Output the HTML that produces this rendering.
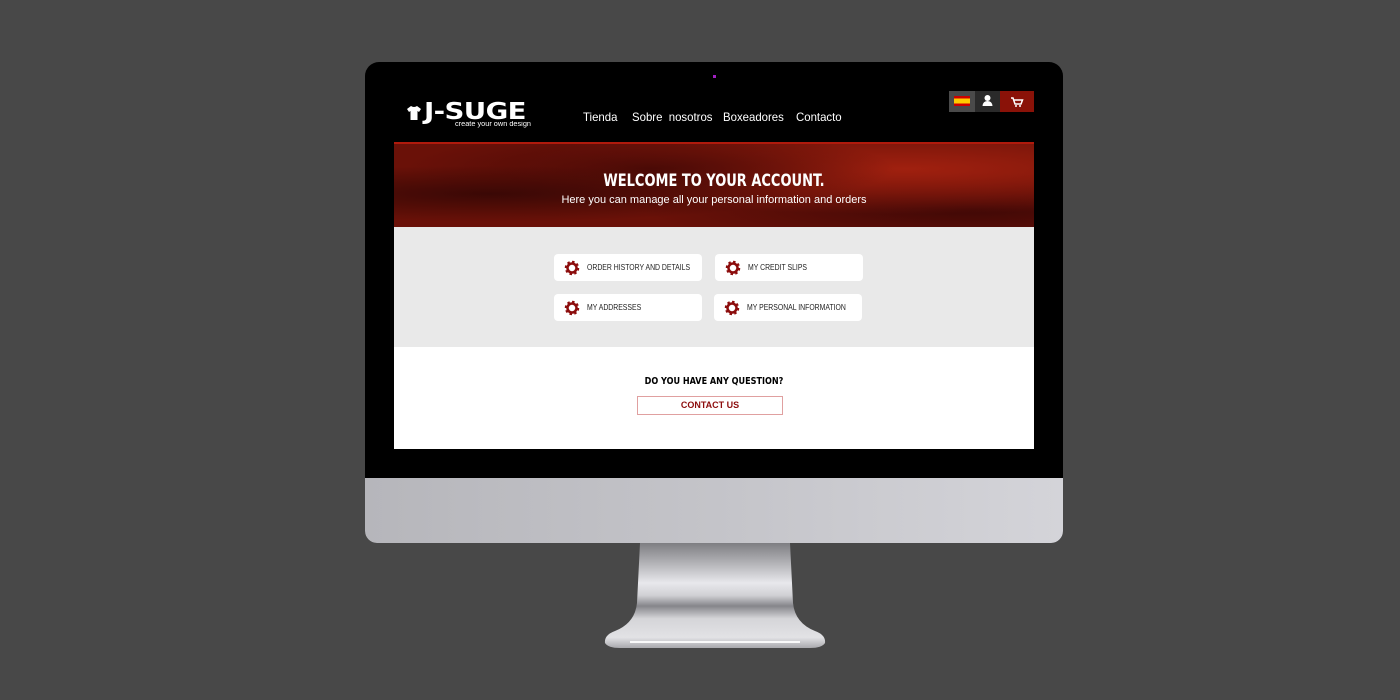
<!DOCTYPE html>
<html><head><meta charset="utf-8"><style>
*{margin:0;padding:0;box-sizing:border-box}
body{width:1400px;height:700px;background:#484848;position:relative;overflow:hidden;font-family:"Liberation Sans",sans-serif}
.mon{position:absolute;left:365px;top:62px;width:698px;height:481px;background:#000;border-radius:14px 14px 12px 12px;overflow:hidden}
.chin{position:absolute;left:0;top:416px;width:698px;height:65px;background:linear-gradient(90deg,#b6b6bb,#c4c4c9 50%,#d4d4d9)}
.cam{position:absolute;left:348px;top:13px;width:3px;height:3px;background:#a020c0}
.a{position:absolute}
.nav{color:#fff;font-size:12px;top:48px;transform:scaleX(.95);transform-origin:left}
.card{position:absolute;background:#fff;border-radius:4px;width:148px;height:27px;color:#222}
.card span{position:absolute;left:33px;top:9px;font-size:8px;white-space:nowrap;transform:scaleX(.86);transform-origin:left}
.card svg{position:absolute;left:10px;top:6px}
</style></head><body>
<svg class="a" style="left:600px;top:543px" width="230" height="110" viewBox="0 0 230 110">
<defs><linearGradient id="g" x1="0" y1="0" x2="0" y2="1">
<stop offset="0" stop-color="#7e7e82"/><stop offset=".2" stop-color="#b5b5b9"/><stop offset=".38" stop-color="#e8e8ec"/><stop offset=".5" stop-color="#d0d0d4"/><stop offset=".6" stop-color="#85858a"/><stop offset=".72" stop-color="#d5d5d8"/><stop offset=".9" stop-color="#e2e2e5"/><stop offset="1" stop-color="#a9a9ad"/></linearGradient></defs>
<path d="M40 0 H190 L193 60 Q195 80 215 88 Q226 92 225 100 Q222 105 210 105 H20 Q8 105 5 100 Q4 92 15 88 Q35 80 37 60 Z" fill="url(#g)"/>
<rect x="30" y="98" width="170" height="2" fill="#fafafa"/>
</svg>
<div class="mon">
<div class="cam"></div>
<div class="chin"></div>
<!-- logo -->
<svg class="a" style="left:42px;top:44px" width="14" height="14" viewBox="0 0 14 14"><path d="M4 0 L0 3 L2 6 L3.5 5 V14 H10.5 V5 L12 6 L14 3 L10 0 Q7 2 4 0 Z" fill="#fff"/></svg>
<div class="a" style="left:59px;top:39px;color:#fff;font-size:23px;line-height:23px;font-weight:bold;font-family:'DejaVu Sans','Liberation Sans',sans-serif;white-space:nowrap;transform:scaleX(1.2);transform-origin:left;letter-spacing:-0.5px">J-SUGE</div>
<div class="a" style="left:90px;top:59px;color:#fff;font-size:7px;white-space:nowrap;transform:scaleX(1.05);transform-origin:left">create your own design</div>
<div class="a nav" style="left:218px">Tienda</div>
<div class="a nav" style="left:267px">Sobre&nbsp; nosotros</div>
<div class="a nav" style="left:358px">Boxeadores</div>
<div class="a nav" style="left:431px">Contacto</div>
<div class="a" style="left:584px;top:29px;width:26px;height:21px;background:#4a4a4a"><div style="margin:5px 0 0 5px;width:16px;height:10px;background:linear-gradient(#c00 25%,#fc0 25%,#fc0 75%,#c00 75%)"></div></div>
<div class="a" style="left:610px;top:29px;width:25px;height:21px;background:#2a2a2a"><svg width="25" height="21"><circle cx="12.5" cy="7" r="3" fill="#fff"/><path d="M7.5 15 Q8 10 12.5 10 Q17 10 17.5 15 Z" fill="#fff"/></svg></div>
<div class="a" style="left:635px;top:29px;width:34px;height:21px;background:#8a1208"><svg width="34" height="21"><path d="M11 7 H13 L15 13 H21 L22.5 9 H14" stroke="#fff" stroke-width="1.5" fill="none"/><circle cx="16" cy="15" r="1" fill="#fff"/><circle cx="20" cy="15" r="1" fill="#fff"/></svg></div>
<!-- screen content -->
<div class="a" style="left:29px;top:80px;width:640px;height:85px;background:radial-gradient(ellipse at 15% 60%,#3a0805,transparent 40%),radial-gradient(ellipse at 40% 30%,#4a0a06,transparent 45%),radial-gradient(ellipse at 80% 30%,#a0200f,transparent 55%),radial-gradient(ellipse at 90% 80%,#400806,transparent 40%),#6a1108;border-top:2px solid #b01a0c">
<div style="text-align:center;color:#fff;font-family:'DejaVu Sans Condensed','Liberation Sans Narrow',sans-serif;font-weight:bold;font-size:17px;margin-top:27px;transform:scaleX(.85)">WELCOME TO YOUR ACCOUNT.</div>
<div style="text-align:center;color:#fff;font-size:11px;margin-top:3px">Here you can manage all your personal information and orders</div>
</div>
<div class="a" style="left:29px;top:165px;width:640px;height:120px;background:#e9e9e9"></div>
<div class="a" style="left:29px;top:285px;width:640px;height:102px;background:#fff"></div>
<div class="card" style="left:189px;top:192px"><span>ORDER HISTORY AND DETAILS</span><svg width="16" height="16" viewBox="0 0 16 16"><circle cx="8" cy="8" r="5.5" fill="none" stroke="#8c0c0c" stroke-width="3.5" stroke-dasharray="2.2 2.1"/><circle cx="8" cy="8" r="4.5" fill="none" stroke="#8c0c0c" stroke-width="2.5"/></svg></div>
<div class="card" style="left:350px;top:192px"><span>MY CREDIT SLIPS</span><svg width="16" height="16" viewBox="0 0 16 16"><circle cx="8" cy="8" r="5.5" fill="none" stroke="#8c0c0c" stroke-width="3.5" stroke-dasharray="2.2 2.1"/><circle cx="8" cy="8" r="4.5" fill="none" stroke="#8c0c0c" stroke-width="2.5"/></svg></div>
<div class="card" style="left:189px;top:232px"><span>MY ADDRESSES</span><svg width="16" height="16" viewBox="0 0 16 16"><circle cx="8" cy="8" r="5.5" fill="none" stroke="#8c0c0c" stroke-width="3.5" stroke-dasharray="2.2 2.1"/><circle cx="8" cy="8" r="4.5" fill="none" stroke="#8c0c0c" stroke-width="2.5"/></svg></div>
<div class="card" style="left:349px;top:232px"><span>MY PERSONAL INFORMATION</span><svg width="16" height="16" viewBox="0 0 16 16"><circle cx="8" cy="8" r="5.5" fill="none" stroke="#8c0c0c" stroke-width="3.5" stroke-dasharray="2.2 2.1"/><circle cx="8" cy="8" r="4.5" fill="none" stroke="#8c0c0c" stroke-width="2.5"/></svg></div>
<div class="a" style="left:29px;top:314px;width:640px;text-align:center;font-family:'DejaVu Sans Condensed',sans-serif;font-weight:bold;font-size:10px;color:#000;transform:scaleX(.9)">DO YOU HAVE ANY QUESTION?</div>
<div class="a" style="left:272px;top:334px;width:146px;height:19px;border:1px solid #e0a0a0;text-align:center;line-height:17px;font-size:9px;font-weight:bold;color:#8c0c0c">CONTACT US</div>
</div>
</body></html>
